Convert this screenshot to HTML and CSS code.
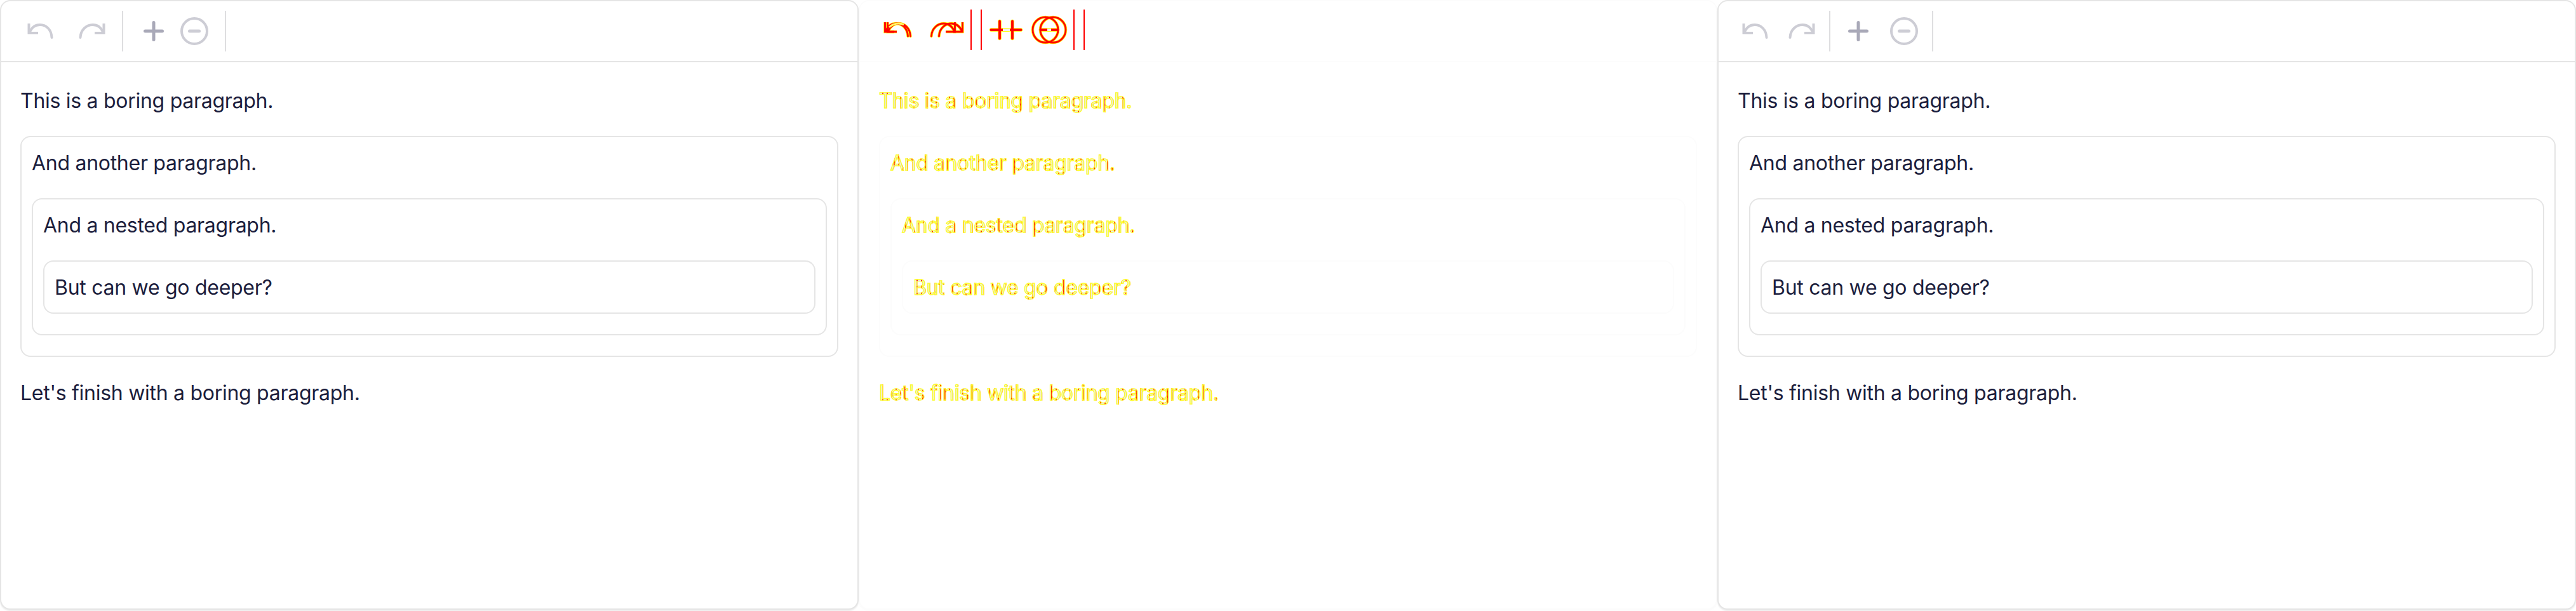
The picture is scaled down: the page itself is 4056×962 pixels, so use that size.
FILE: index.html
```html
<!DOCTYPE html>
<html lang="en">

<head>
    <meta charset="UTF-8">
    <title>Nested paragraphs diff</title>
    <link rel="stylesheet" href="styles.css">
</head>

<body>
    <svg class="sprite" xmlns="http://www.w3.org/2000/svg">
        <symbol id="undo" viewBox="0 0 64 64">
            <path class="head" d="M13.5 20V35H28" />
            <path class="arc" d="M14.5 34C18 26 24 22 31 22C41 22 49 30 49.5 42" />
        </symbol>
        <symbol id="redo" viewBox="0 0 64 64">
            <path class="head" d="M51.5 20V35H37" />
            <path class="arc" d="M50.5 34C47 26 41 22 34 22C24 22 15 30 14.5 42" />
        </symbol>
        <symbol id="plus" viewBox="0 0 64 64">
            <path class="bar" d="M18.5 32H45.5M32 18.5V45.5" />
        </symbol>
        <symbol id="minus" viewBox="0 0 64 64">
            <circle class="arc" cx="32" cy="32" r="20" />
            <path class="bar" d="M24.5 32H39.5" />
        </symbol>
    </svg>

    <div id="wrapper">
        <!-- before -->
        <section class="panel">
            <nav class="toolbar">
                <button class="btn"><svg class="icon"><use href="#undo" /></svg></button>
                <button class="btn btn-gap"><svg class="icon"><use href="#redo" /></svg></button>
                <span class="sep"></span>
                <button class="btn"><svg class="icon icon-active"><use href="#plus" /></svg></button>
                <button class="btn"><svg class="icon"><use href="#minus" /></svg></button>
                <span class="sep"></span>
            </nav>
            <div class="content">
                <p>This is a boring paragraph.</p>
                <div class="box">
                    <p>And another paragraph.</p>
                    <div class="box">
                        <p>And a nested paragraph.</p>
                        <div class="box">
                            <p>But can we go deeper?</p>
                        </div>
                    </div>
                </div>
                <p>Let's finish with a boring paragraph.</p>
            </div>
        </section>

        <!-- diff -->
        <section class="panel panel-diff">
            <nav class="toolbar toolbar-diff">
                <svg class="diff-icons" viewBox="0 0 500 96">
                    <g class="edge">
                        <use href="#undo" x="26" y="14" width="64" height="64" />
                        <use href="#undo" x="30" y="14" width="64" height="64" />
                        <use href="#redo" x="98" y="14" width="64" height="64" />
                        <use href="#redo" x="110" y="14" width="64" height="64" />
                        <use href="#plus" x="188" y="14" width="64" height="64" />
                        <use href="#plus" x="208" y="14" width="64" height="64" />
                        <use href="#minus" x="260" y="14" width="64" height="64" />
                        <use href="#minus" x="272" y="14" width="64" height="64" />
                    </g>
                    <g class="core">
                        <use href="#undo" x="26" y="14" width="64" height="64" />
                        <use href="#undo" x="30" y="14" width="64" height="64" />
                        <use href="#redo" x="98" y="14" width="64" height="64" />
                        <use href="#redo" x="110" y="14" width="64" height="64" />
                        <use href="#plus" x="188" y="14" width="64" height="64" />
                        <use href="#plus" x="208" y="14" width="64" height="64" />
                        <use href="#minus" x="260" y="14" width="64" height="64" />
                        <use href="#minus" x="272" y="14" width="64" height="64" />
                    </g>
                    <path class="overlap" d="M46 42C50 38 55 36 61 36C64 36 67 37 69 38" />
                    <path class="same" d="M225 46H236M295 46H301" />
                    <path class="sep-line" d="M175 14V78M191 14V78M337 14V78M353 14V78" />
                </svg>
            </nav>
            <div class="content">
                <p>This is a boring paragraph.</p>
                <div class="box">
                    <p>And another paragraph.</p>
                    <div class="box">
                        <p>And a nested paragraph.</p>
                        <div class="box">
                            <p>But can we go deeper?</p>
                        </div>
                    </div>
                </div>
                <p>Let's finish with a boring paragraph.</p>
            </div>
        </section>

        <!-- after -->
        <section class="panel panel-after">
            <nav class="toolbar toolbar-tight">
                <button class="btn"><svg class="icon"><use href="#undo" /></svg></button>
                <button class="btn"><svg class="icon"><use href="#redo" /></svg></button>
                <span class="sep"></span>
                <button class="btn"><svg class="icon icon-active"><use href="#plus" /></svg></button>
                <button class="btn"><svg class="icon"><use href="#minus" /></svg></button>
                <span class="sep"></span>
            </nav>
            <div class="content">
                <p>This is a boring paragraph.</p>
                <div class="box">
                    <p>And another paragraph.</p>
                    <div class="box">
                        <p>And a nested paragraph.</p>
                        <div class="box">
                            <p>But can we go deeper?</p>
                        </div>
                    </div>
                </div>
                <p>Let's finish with a boring paragraph.</p>
            </div>
        </section>
    </div>
</body>

</html>
```

FILE: styles.css
```css
* {
    margin: 0;
    padding: 0;
    box-sizing: border-box;
}

html,
body {
    background-color: #fff;
    height: 100%;
    overflow: hidden;
}

body {
    font-family: Inter, "Liberation Sans", sans-serif;
    font-size: 32px;
    letter-spacing: -0.28px;
    color: #1c1e3d;
}

.sprite {
    display: none;
}

#wrapper {
    display: flex;
    height: 960px;
}

.panel {
    flex: 1 1 0;
    background: #fff;
    border: 2px solid #e5e5e5;
    border-radius: 16px;
    box-shadow: 0 2px 2px rgba(0, 0, 0, 0.08);
}

/* toolbar */
.toolbar {
    display: flex;
    align-items: center;
    height: 96px;
    padding-left: 30px;
    border-bottom: 2px solid #e5e5e5;
}

.toolbar-tight {
    padding-left: 22px;
}

.btn {
    display: flex;
    justify-content: center;
    width: 64px;
    height: 64px;
    background: none;
    border: 0;
}

.btn-gap {
    margin-left: 16px;
}

.toolbar-tight .btn {
    width: 72px;
    margin-left: 0;
}

.sep {
    width: 2px;
    height: 64px;
    margin: 0 16px;
    background: #dedee0;
}

.toolbar-tight .sep {
    margin: 0 8px;
}

.icon {
    width: 64px;
    height: 64px;
    stroke: #cdcdd5;
}

.icon-active {
    stroke: #a9a9b8;
}

.head,
.arc,
.bar {
    fill: none;
}

.head {
    stroke-width: calc(4px + var(--edge, 0px));
}

.arc {
    stroke-width: calc(4px + var(--edge, 0px));
    stroke-linecap: round;
}

.bar {
    stroke-width: calc(5px + var(--edge, 0px));
    stroke-linecap: round;
}

/* content */
.content {
    padding: 36px 30px 0;
}

p {
    padding-top: 2px;
    line-height: 46px;
}

.content > p {
    margin-bottom: 32px;
}

.box {
    padding: 16px;
    border: 2px solid #e5e5e5;
    border-radius: 16px;
}

.box > p {
    margin-bottom: 32px;
}

.box > p:last-child {
    margin-bottom: 0;
}

.box .box {
    margin-bottom: 16px;
}

.content > .box {
    margin-bottom: 32px;
}

/* middle panel, the pixels that changed */
.panel-diff {
    border-color: #fcfcfc;
    box-shadow: 0 2px 2px rgba(0, 0, 0, 0.015);
}

.panel-diff .toolbar {
    border-bottom-color: #fcfcfc;
    padding-left: 0;
}

.panel-diff .box {
    border-color: #fcfcfc;
}

.panel-diff p {
    width: fit-content;
    background: repeating-linear-gradient(90deg, #e8e8e8 0 5px, #ff2000 5px 7px);
    -webkit-background-clip: text;
    background-clip: text;
    color: transparent;
    -webkit-text-stroke: 1.4px #ffff30;
}

.diff-icons {
    width: 500px;
    height: 96px;
}

.edge {
    stroke: #ffff00;
    --edge: 0.5px;
}

.core {
    stroke: #ff0000;
    --edge: -1.2px;
}

.overlap {
    fill: none;
    stroke: #ffff60;
    stroke-width: 3px;
}

.same {
    fill: none;
    stroke: #f2f2f2;
    stroke-width: 4px;
}

.sep-line {
    fill: none;
    stroke: #ff0000;
    stroke-width: 2px;
}
```
